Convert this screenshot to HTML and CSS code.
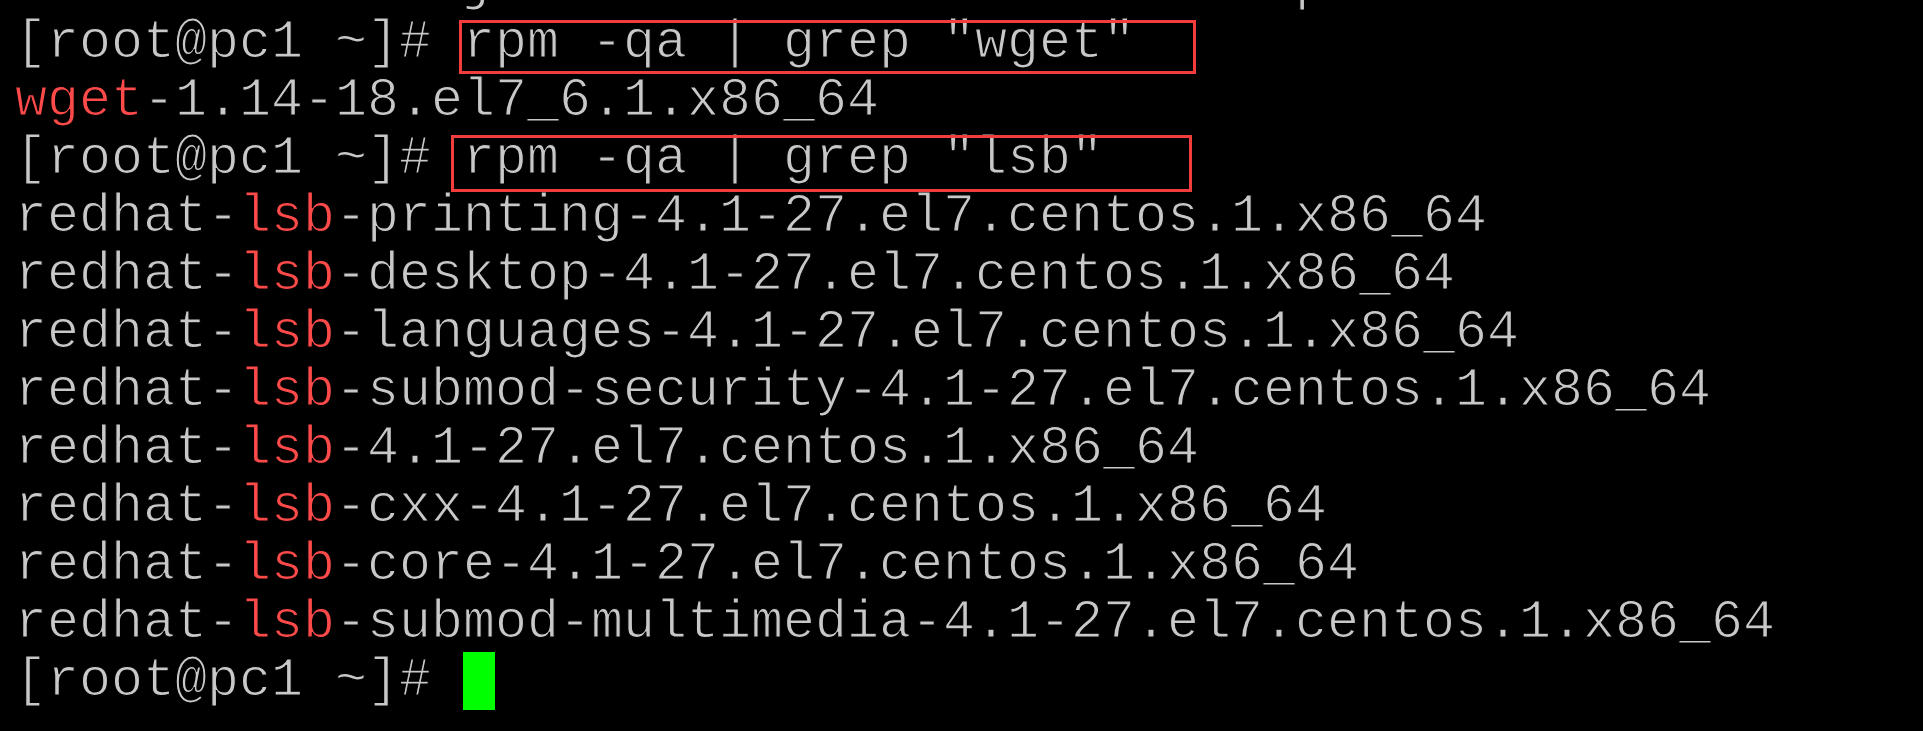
FILE: index.html
```html
<!DOCTYPE html>
<html lang="en">
<head>
<meta charset="utf-8">
<title>Terminal</title>
<link rel="stylesheet" href="styles.css">
</head>
<body>
<div class="term">
  <div class="clip"><div class="line">              j                         p</div></div>
  <div class="line"><span class="prompt">[root@pc1 ~]# </span><span class="cmd cmd-wget">rpm -qa | grep "wget"</span></div>
  <div class="line"><span class="hl">wget</span>-1.14-18.el7_6.1.x86_64</div>
  <div class="line"><span class="prompt">[root@pc1 ~]# </span><span class="cmd cmd-lsb">rpm -qa | grep "lsb"</span></div>
  <div class="line">redhat-<span class="hl">lsb</span>-printing-4.1-27.el7.centos.1.x86_64</div>
  <div class="line">redhat-<span class="hl">lsb</span>-desktop-4.1-27.el7.centos.1.x86_64</div>
  <div class="line">redhat-<span class="hl">lsb</span>-languages-4.1-27.el7.centos.1.x86_64</div>
  <div class="line">redhat-<span class="hl">lsb</span>-submod-security-4.1-27.el7.centos.1.x86_64</div>
  <div class="line">redhat-<span class="hl">lsb</span>-4.1-27.el7.centos.1.x86_64</div>
  <div class="line">redhat-<span class="hl">lsb</span>-cxx-4.1-27.el7.centos.1.x86_64</div>
  <div class="line">redhat-<span class="hl">lsb</span>-core-4.1-27.el7.centos.1.x86_64</div>
  <div class="line">redhat-<span class="hl">lsb</span>-submod-multimedia-4.1-27.el7.centos.1.x86_64</div>
  <div class="line"><span class="prompt">[root@pc1 ~]# </span><span class="cursor"></span></div>
</div>
</body>
</html>
```
FILE: styles.css
```css
html, body {
  margin: 0;
  padding: 0;
  background: #000;
}

body {
  width: 1923px;
  height: 731px;
  overflow: hidden;
}

.term {
  padding-left: 15px;
  font-family: "Courier New", "Nimbus Mono PS", "Nimbus Mono L", "FreeMono", "Courier 10 Pitch", "Liberation Mono", monospace;
  font-size: 53.33px;
  line-height: 58px;
  color: #c8c8c8;
  -webkit-text-stroke: 1.2px #000;
}

.clip {
  height: 14px;
  overflow: hidden;
  display: flex;
  flex-direction: column;
  justify-content: flex-end;
}

.line {
  height: 58px;
  flex: none;
  white-space: pre;
}

.hl {
  color: #ff4a4a;
}

.cmd {
  position: relative;
}

.cmd::after {
  content: "";
  position: absolute;
  box-sizing: border-box;
  border: 3px solid #f33c3c;
}

.cmd-wget::after {
  left: -4px;
  top: 7px;
  width: 737px;
  height: 54px;
}

.cmd-lsb::after {
  left: -12px;
  top: 6px;
  width: 741px;
  height: 57px;
}

.cursor {
  display: inline-block;
  width: 32px;
  height: 58px;
  vertical-align: top;
  background: #00ff00;
}
```
